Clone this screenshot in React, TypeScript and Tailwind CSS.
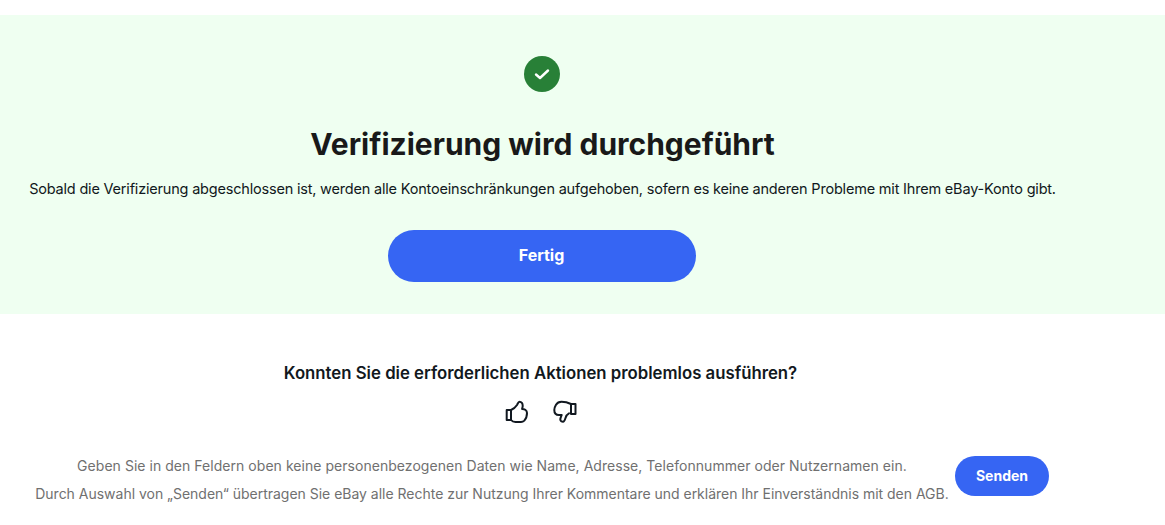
import React from 'react';

const FONT = "font-['Inter','Noto_Sans',sans-serif]";

function ThumbUp() {
  return (
    <svg width="24" height="24" viewBox="0 0 24 24" fill="none" stroke="#111820" strokeWidth="2" strokeLinejoin="round" strokeLinecap="round">
      <path d="M1.700 10h4.300v10H1.700z" />
      <path d="M6 10c2.500-1 4.500-2.700 6-5 .8-1.300 1.200-3.300 2.500-3.300 2 0 3.200 2 3.200 4 0 1.300-.4 2.300-.6 3.300 2 0 4.900 1 4.900 4 0 2.300-1.200 6-2.700 7.600-1 1-2 1.400-3.300 1.400h-5.500c-1.800 0-3.300-.5-4.500-2" />
    </svg>
  );
}

function ThumbDown() {
  return (
    <svg width="24" height="24" viewBox="0 0 24 24" fill="none" stroke="#111820" strokeWidth="2" strokeLinejoin="round" strokeLinecap="round">
      <path d="M18 4h4.500v10H18z" />
      <path d="M18 4c-3-1.500-6.500-2.300-9.500-2.300-2.500 0-4.200.9-5.500 3-1 1.600-1.700 3.300-1.700 5.300 0 3 1.700 5 4.700 5h2.700c-.6 1.500-1.400 3-1.400 4.500 0 1.300 1.500 2.200 2.700 2.200 1.500 0 2-2 2.500-3.700.5-1.800 1.500-3.700 3.500-4.700" />
    </svg>
  );
}

export default function App() {
  return (
    <div className={`${FONT} w-[1165px] h-[525px] overflow-hidden bg-white pt-[15px] text-[#111820]`}>
      {/* Success panel */}
      <section className="h-[299px] bg-[#effff1] w-full">
        <div className="w-[1083px] flex flex-col items-center pt-[41px]">
          <div className="w-9 h-9 rounded-full bg-[#288037] flex items-center justify-center">
            <svg width="16" height="16" viewBox="0 0 16 16" fill="none" stroke="white" strokeWidth="2.400" strokeLinecap="round" strokeLinejoin="round">
              <path d="M2 8.500l4 3.500 8-7.500" />
            </svg>
          </div>
          <h1 className="mt-[32px] ml-[2px] text-[30px] leading-[40px] font-bold text-[#191919]">Verifizierung wird durchgeführt</h1>
          <p className="mt-[13px] ml-[2px] text-[14.5px] leading-[24px] tracking-[-0.195px] whitespace-nowrap">
            Sobald die Verifizierung abgeschlossen ist, werden alle Kontoeinschränkungen aufgehoben, sofern es keine anderen Probleme mit Ihrem eBay-Konto gibt.
          </p>
          <button className="mt-[29px] w-[308px] h-[52px] pb-[2px] rounded-full bg-[#3665f3] text-white text-base font-bold">Fertig</button>
        </div>
      </section>

      {/* Feedback */}
      <section className="w-[1083px] flex flex-col items-center pt-[47px]">
        <h2 className="-ml-[2px] text-[16.76px] leading-[24px] font-semibold">Konnten Sie die erforderlichen Aktionen problemlos ausführen?</h2>
        <div className="mt-[15px] -ml-[2px] flex items-center gap-6">
          <ThumbUp />
          <ThumbDown />
        </div>
      </section>
      <div className="flex items-start mt-[28px] pl-[35px]">
        <div className="w-[914px] text-center text-[14px] leading-[28px] text-[#707070] whitespace-nowrap">
          <p className="tracking-[0.04px]">Geben Sie in den Feldern oben keine personenbezogenen Daten wie Name, Adresse, Telefonnummer oder Nutzernamen ein.</p>
          <p className="tracking-[-0.015px]">Durch Auswahl von „Senden“ übertragen Sie eBay alle Rechte zur Nutzung Ihrer Kommentare und erklären Ihr Einverständnis mit den AGB.</p>
        </div>
        <button className="ml-[6px] mt-1 pb-[2px] w-[94px] h-10 rounded-full bg-[#3665f3] text-white text-[14px] font-bold">Senden</button>
      </div>
    </div>
  );
}
